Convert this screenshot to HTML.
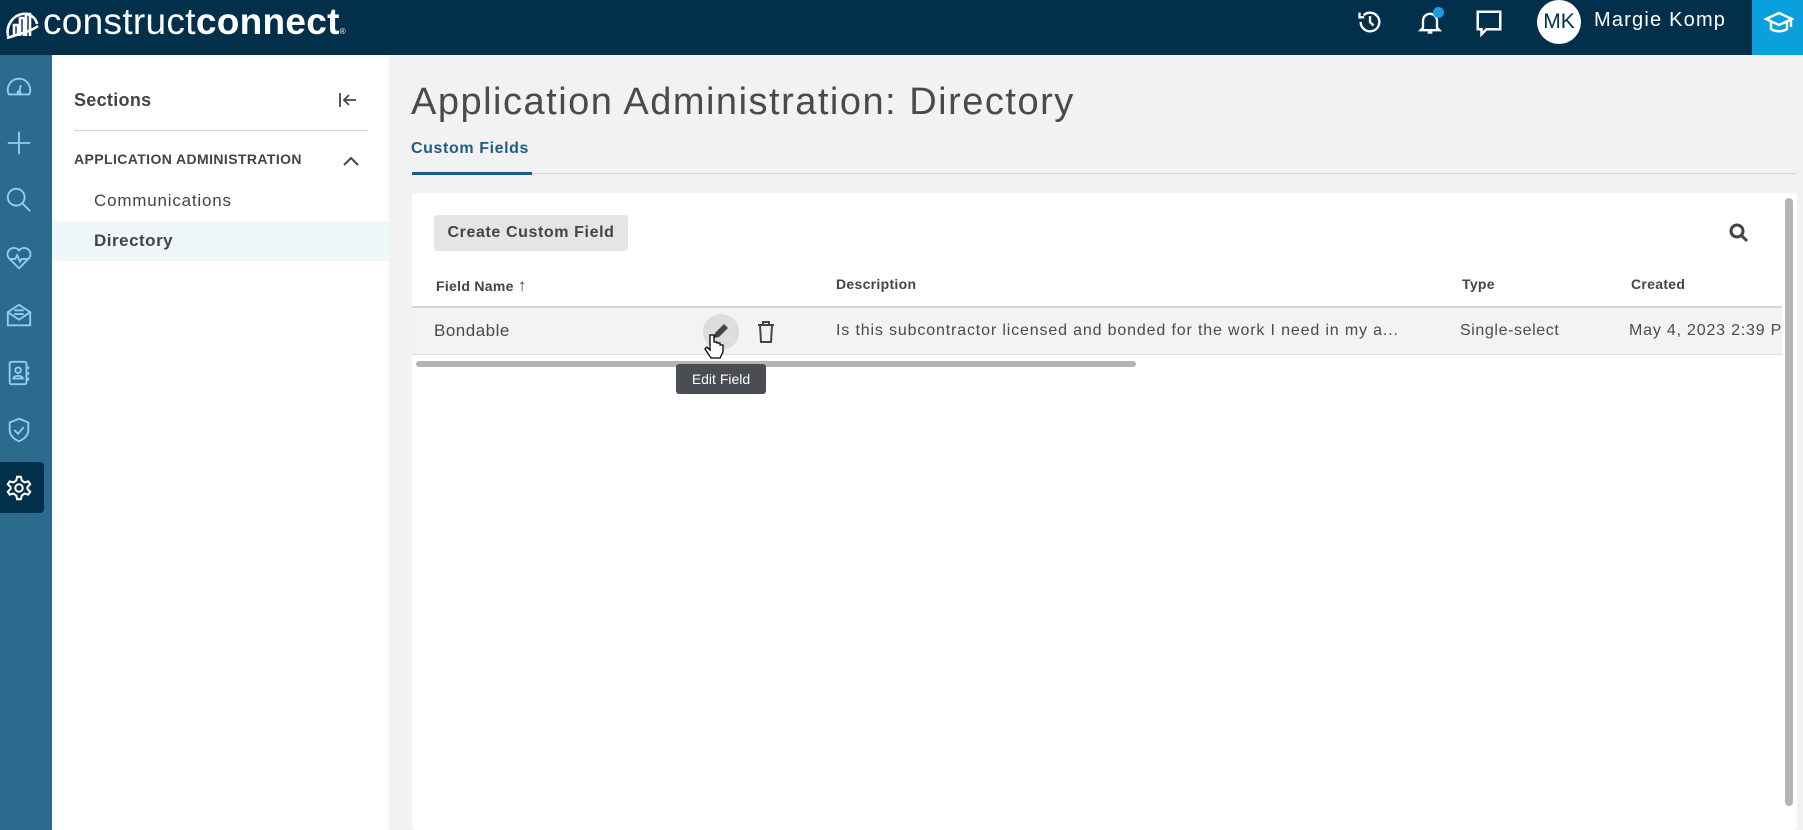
<!DOCTYPE html>
<html><head><meta charset="utf-8"><style>
*{margin:0;padding:0;box-sizing:border-box}
body{width:1803px;height:830px;overflow:hidden;background:#f2f2f2;font-family:"Liberation Sans",sans-serif;color:#4a4a4a;position:relative}
.abs{position:absolute}
.hdr{left:0;top:0;width:1803px;height:55px;background:#02304a}
.rail{left:0;top:55px;width:52px;height:775px;background:#2b6b8d}
.side{left:52px;top:55px;width:337px;height:775px;background:#fff}
.card{left:412px;top:193px;width:1385px;height:637px;background:#fff;border-radius:4px}
.ic{position:absolute;left:5px;width:28px;height:28px}
</style></head><body>
<div class="abs hdr"></div>
<svg class="abs" style="left:4px;top:6px" width="36" height="36" viewBox="0 0 36 36" fill="none" stroke="#fff" stroke-width="2.6"><path d="M4 30 C2 20 8 10 18 8 C26 7 32 12 33 18"/><path d="M10 30V19h4v11M16 30V12h4v18M22 30V8h4v22"/><path d="M3 32 C14 28 26 26 34 20"/></svg>
<div class="abs" style="left:43px;top:2px;font-size:37px;color:#fff;letter-spacing:0.3px;line-height:40px">construct<b>connect</b><span style="font-size:8px">®</span></div>
<svg class="abs" style="left:1356px;top:8px" width="28" height="28" viewBox="0 0 24 24" fill="none" stroke="#fff" stroke-width="2"><path d="M4 12a8 8 0 1 0 2.5-5.8"/><path d="M3 4v4h4"/><path d="M12 7v5l3 3"/></svg>
<svg class="abs" style="left:1416px;top:8px" width="28" height="28" viewBox="0 0 24 24" fill="none" stroke="#fff" stroke-width="2"><path d="M6 17V11a6 6 0 0 1 12 0v6l2 2H4z"/><path d="M10 21h4"/></svg>
<div class="abs" style="left:1433px;top:7px;width:11px;height:11px;border-radius:50%;background:#1b9ae0"></div>
<svg class="abs" style="left:1474px;top:8px" width="30" height="30" viewBox="0 0 24 24" fill="none" stroke="#fff" stroke-width="2"><path d="M3 3h18v14H10l-4 4v-4H3z"/></svg>
<div class="abs" style="left:1537px;top:0;width:44px;height:44px;border-radius:50%;background:#fff;color:#02304a;font-size:21px;text-align:center;line-height:44px">MK</div>
<div class="abs" style="left:1594px;top:9px;font-size:20px;color:#fff;letter-spacing:1.2px">Margie Komp</div>
<div class="abs" style="left:1752px;top:0;width:51px;height:55px;background:#0aa0de"></div>
<svg class="abs" style="left:1764px;top:10px" width="30" height="26" viewBox="0 0 30 26" fill="none" stroke="#fff" stroke-width="2.4"><path d="M2 9l13-6 13 6-13 6z"/><path d="M7 12v7c4 3 12 3 16 0v-7"/><path d="M27 9v8"/></svg>
<div class="abs rail">
<svg class="ic" style="top:17px" viewBox="0 0 30 30" fill="none" stroke="#8fd0f2" stroke-width="2"><path d="M4 24a12 12 0 1 1 22 0z"/><path d="M15 22l2-8"/><circle cx="15" cy="22" r="1.5"/></svg>
<svg class="ic" style="top:74px" viewBox="0 0 30 30" fill="none" stroke="#8fd0f2" stroke-width="2"><path d="M15 3v24M3 15h24"/></svg>
<svg class="ic" style="top:131px" viewBox="0 0 30 30" fill="none" stroke="#8fd0f2" stroke-width="2"><circle cx="12" cy="12" r="9"/><path d="M19 19l8 8"/></svg>
<svg class="ic" style="top:189px" viewBox="0 0 30 30" fill="none" stroke="#8fd0f2" stroke-width="2"><path d="M15 26L4 15a6 6 0 0 1 11-8 6 6 0 0 1 11 8z"/><path d="M5 16h6l2-4 3 7 2-3h6"/></svg>
<svg class="ic" style="top:246px" viewBox="0 0 30 30" fill="none" stroke="#8fd0f2" stroke-width="2"><path d="M3 12l12-8 12 8v14H3z"/><path d="M3 12l12 8 12-8"/><path d="M10 10h10M10 14h10"/></svg>
<svg class="ic" style="top:304px" viewBox="0 0 30 30" fill="none" stroke="#8fd0f2" stroke-width="2"><rect x="5" y="3" width="18" height="24" rx="2"/><circle cx="14" cy="12" r="3"/><path d="M9 21c0-4 10-4 10 0z"/><path d="M25 8v3M25 14v3M25 20v3"/></svg>
<svg class="ic" style="top:361px" viewBox="0 0 30 30" fill="none" stroke="#8fd0f2" stroke-width="2"><path d="M15 3l10 4v8c0 6-5 10-10 12-5-2-10-6-10-12V7z"/><path d="M10 15l4 4 6-7"/></svg>
<div class="abs" style="left:0;top:407px;width:44px;height:51px;background:#02304a;border-radius:0 4px 4px 0"></div>
<svg class="ic" style="top:419px" viewBox="0 0 30 30" fill="none" stroke="#fff" stroke-width="2.2"><circle cx="15" cy="15" r="4"/><path d="M13 3h4l1 4 3 2 4-1 2 3-3 3v2l3 3-2 3-4-1-3 2-1 4h-4l-1-4-3-2-4 1-2-3 3-3v-2l-3-3 2-3 4 1 3-2z"/></svg>
</div>
<div class="abs side">
<div class="abs" style="left:22px;top:35px;font-size:18px;font-weight:bold;color:#444;letter-spacing:0.3px">Sections</div>
<svg class="abs" style="left:286px;top:36px" width="20" height="18" viewBox="0 0 20 18" fill="none" stroke="#444" stroke-width="1.8"><path d="M2 2v14M18 9H6M11 4L6 9l5 5"/></svg>
<div class="abs" style="left:22px;top:75px;width:293px;height:1px;background:#d4d4d4"></div>
<div class="abs" style="left:22px;top:96px;font-size:14px;font-weight:bold;color:#444;letter-spacing:0.4px">APPLICATION ADMINISTRATION</div>
<svg class="abs" style="left:290px;top:100px" width="18" height="12" viewBox="0 0 18 12" fill="none" stroke="#444" stroke-width="2"><path d="M2 10l7-7 7 7"/></svg>
<div class="abs" style="left:42px;top:136px;font-size:17px;color:#444;letter-spacing:0.8px">Communications</div>
<div class="abs" style="left:0;top:166px;width:337px;height:40px;background:#f0f7fb"></div>
<div class="abs" style="left:42px;top:176px;font-size:17px;font-weight:bold;color:#444;letter-spacing:0.5px">Directory</div>
</div>
<div class="abs" style="left:411px;top:81px;font-size:38px;color:#4a4a4a;letter-spacing:1.5px">Application Administration: Directory</div>
<div class="abs" style="left:411px;top:140px;font-size:16px;font-weight:bold;color:#1b5e84;letter-spacing:0.6px">Custom Fields</div>
<div class="abs" style="left:412px;top:173px;width:1385px;height:1px;background:#d4d4d4"></div>
<div class="abs" style="left:412px;top:172px;width:120px;height:3px;background:#1b5e84"></div>
<div class="abs card"></div>
<div class="abs" style="left:434px;top:215px;width:194px;height:36px;background:#e6e5e4;border-radius:3px;font-size:16px;font-weight:bold;color:#444;text-align:center;line-height:36px;letter-spacing:0.6px">Create Custom Field</div>
<svg class="abs" style="left:1728px;top:222px" width="22" height="22" viewBox="0 0 22 22" fill="none" stroke="#444" stroke-width="3"><circle cx="9" cy="9" r="6"/><path d="M14 14l5 5"/></svg>
<div class="abs" style="left:436px;top:276px;font-size:14px;font-weight:bold;color:#444;letter-spacing:0.3px">Field Name <span style="font-size:17px">↑</span></div>
<div class="abs" style="left:836px;top:276px;font-size:14px;font-weight:bold;color:#444;letter-spacing:0.3px">Description</div>
<div class="abs" style="left:1462px;top:276px;font-size:14px;font-weight:bold;color:#444;letter-spacing:0.3px">Type</div>
<div class="abs" style="left:1631px;top:276px;font-size:14px;font-weight:bold;color:#444;letter-spacing:0.3px">Created</div>
<div class="abs" style="left:412px;top:306px;width:1370px;height:2px;background:#d4d4d4"></div>
<div class="abs" style="left:412px;top:308px;width:1370px;height:47px;background:#f3f3f3;border-bottom:1px solid #ddd"></div>
<div class="abs" style="left:434px;top:321px;font-size:17px;color:#4a4a4a;letter-spacing:0.5px">Bondable</div>
<div class="abs" style="left:836px;top:322px;font-size:16px;color:#4a4a4a;white-space:nowrap;letter-spacing:0.85px">Is this subcontractor licensed and bonded for the work I need in my a...</div>
<div class="abs" style="left:1460px;top:322px;font-size:16px;color:#4a4a4a;letter-spacing:0.6px">Single-select</div>
<div class="abs" style="left:1629px;top:322px;font-size:16px;color:#4a4a4a;white-space:nowrap;width:153px;overflow:hidden;letter-spacing:0.8px">May 4, 2023 2:39 PM</div>
<div class="abs" style="left:703px;top:314px;width:36px;height:36px;border-radius:50%;background:#ddd"></div>
<svg class="abs" style="left:711px;top:321px" width="20" height="20" viewBox="0 0 20 20"><path d="M3 17l1-5 9-9 4 4-9 9z" fill="#444"/></svg>
<svg class="abs" style="left:756px;top:320px" width="20" height="24" viewBox="0 0 20 24" fill="none" stroke="#444" stroke-width="2"><path d="M2 5h16M7 5V2h6v3M4 5l1 17h10l1-17"/></svg>
<svg class="abs" style="left:704px;top:333px" width="22" height="30" viewBox="0 0 22 30"><path d="M6 2v15l-3-3-2 2 6 9h9l3-6v-7h-3v-2h-3v-1h-3V2z" fill="#fff" stroke="#000" stroke-width="1.3"/></svg>
<div class="abs" style="left:416px;top:361px;width:720px;height:6px;background:#b5b5b5;border-radius:3px"></div>
<div class="abs" style="left:676px;top:364px;width:90px;height:30px;background:#4a4d52;border-radius:3px;color:#fff;font-size:14px;text-align:center;line-height:30px">Edit Field</div>
<div class="abs" style="left:1785px;top:198px;width:8px;height:608px;background:#b5b5b5;border-radius:4px"></div>
</body></html>
